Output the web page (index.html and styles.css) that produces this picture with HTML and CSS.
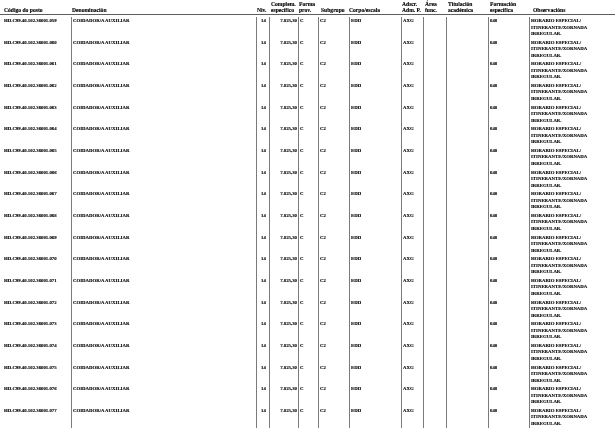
FILE: index.html
```html
<!DOCTYPE html>
<html lang="gl">
<head>
<meta charset="utf-8">
<title>RPT</title>
<link rel="stylesheet" href="styles.css">
</head>
<body>
<div class="page">
  <div class="head">
    <div class="h h-cod">Código do posto</div>
    <div class="h h-den">Denominación</div>
    <div class="h h-niv">Niv.</div>
    <div class="h h-com">Complem.<br>específico</div>
    <div class="h h-for">Forma<br>prov.</div>
    <div class="h h-sub">Subgrupo</div>
    <div class="h h-cor">Corpo/escala</div>
    <div class="h h-ads">Adscr.<br>Adm. P.</div>
    <div class="h h-are">Área<br>func.</div>
    <div class="h h-tit">Titulación<br>académica</div>
    <div class="h h-fes">Formación<br>específica</div>
    <div class="h h-obs">Observacións</div>
  </div>
  <div class="rows">
    <div class="row"><div class="c">HD.C99.40.102.36001.059</div><div class="c b">COIDADOR/A AUXILIAR</div><div class="c b ctr">14</div><div class="c b r">7.825,30</div><div class="c b">C</div><div class="c b">C2</div><div class="c b">EDD</div><div class="c b">AXG</div><div class="c b"></div><div class="c b"></div><div class="c b">648</div><div class="c b obs">HORARIO ESPECIAL/<br>ITINERANTE/XORNADA<br>IRREGULAR.</div></div>
    <div class="row"><div class="c">HD.C99.40.102.36001.060</div><div class="c b">COIDADOR/A AUXILIAR</div><div class="c b ctr">14</div><div class="c b r">7.825,30</div><div class="c b">C</div><div class="c b">C2</div><div class="c b">EDD</div><div class="c b">AXG</div><div class="c b"></div><div class="c b"></div><div class="c b">648</div><div class="c b obs">HORARIO ESPECIAL/<br>ITINERANTE/XORNADA<br>IRREGULAR.</div></div>
    <div class="row"><div class="c">HD.C99.40.102.36001.061</div><div class="c b">COIDADOR/A AUXILIAR</div><div class="c b ctr">14</div><div class="c b r">7.825,30</div><div class="c b">C</div><div class="c b">C2</div><div class="c b">EDD</div><div class="c b">AXG</div><div class="c b"></div><div class="c b"></div><div class="c b">648</div><div class="c b obs">HORARIO ESPECIAL/<br>ITINERANTE/XORNADA<br>IRREGULAR.</div></div>
    <div class="row"><div class="c">HD.C99.40.102.36001.062</div><div class="c b">COIDADOR/A AUXILIAR</div><div class="c b ctr">14</div><div class="c b r">7.825,30</div><div class="c b">C</div><div class="c b">C2</div><div class="c b">EDD</div><div class="c b">AXG</div><div class="c b"></div><div class="c b"></div><div class="c b">648</div><div class="c b obs">HORARIO ESPECIAL/<br>ITINERANTE/XORNADA<br>IRREGULAR.</div></div>
    <div class="row"><div class="c">HD.C99.40.102.36001.063</div><div class="c b">COIDADOR/A AUXILIAR</div><div class="c b ctr">14</div><div class="c b r">7.825,30</div><div class="c b">C</div><div class="c b">C2</div><div class="c b">EDD</div><div class="c b">AXG</div><div class="c b"></div><div class="c b"></div><div class="c b">648</div><div class="c b obs">HORARIO ESPECIAL/<br>ITINERANTE/XORNADA<br>IRREGULAR.</div></div>
    <div class="row"><div class="c">HD.C99.40.102.36001.064</div><div class="c b">COIDADOR/A AUXILIAR</div><div class="c b ctr">14</div><div class="c b r">7.825,30</div><div class="c b">C</div><div class="c b">C2</div><div class="c b">EDD</div><div class="c b">AXG</div><div class="c b"></div><div class="c b"></div><div class="c b">648</div><div class="c b obs">HORARIO ESPECIAL/<br>ITINERANTE/XORNADA<br>IRREGULAR.</div></div>
    <div class="row"><div class="c">HD.C99.40.102.36001.065</div><div class="c b">COIDADOR/A AUXILIAR</div><div class="c b ctr">14</div><div class="c b r">7.825,30</div><div class="c b">C</div><div class="c b">C2</div><div class="c b">EDD</div><div class="c b">AXG</div><div class="c b"></div><div class="c b"></div><div class="c b">648</div><div class="c b obs">HORARIO ESPECIAL/<br>ITINERANTE/XORNADA<br>IRREGULAR.</div></div>
    <div class="row"><div class="c">HD.C99.40.102.36001.066</div><div class="c b">COIDADOR/A AUXILIAR</div><div class="c b ctr">14</div><div class="c b r">7.825,30</div><div class="c b">C</div><div class="c b">C2</div><div class="c b">EDD</div><div class="c b">AXG</div><div class="c b"></div><div class="c b"></div><div class="c b">648</div><div class="c b obs">HORARIO ESPECIAL/<br>ITINERANTE/XORNADA<br>IRREGULAR.</div></div>
    <div class="row"><div class="c">HD.C99.40.102.36001.067</div><div class="c b">COIDADOR/A AUXILIAR</div><div class="c b ctr">14</div><div class="c b r">7.825,30</div><div class="c b">C</div><div class="c b">C2</div><div class="c b">EDD</div><div class="c b">AXG</div><div class="c b"></div><div class="c b"></div><div class="c b">648</div><div class="c b obs">HORARIO ESPECIAL/<br>ITINERANTE/XORNADA<br>IRREGULAR.</div></div>
    <div class="row"><div class="c">HD.C99.40.102.36001.068</div><div class="c b">COIDADOR/A AUXILIAR</div><div class="c b ctr">14</div><div class="c b r">7.825,30</div><div class="c b">C</div><div class="c b">C2</div><div class="c b">EDD</div><div class="c b">AXG</div><div class="c b"></div><div class="c b"></div><div class="c b">648</div><div class="c b obs">HORARIO ESPECIAL/<br>ITINERANTE/XORNADA<br>IRREGULAR.</div></div>
    <div class="row"><div class="c">HD.C99.40.102.36001.069</div><div class="c b">COIDADOR/A AUXILIAR</div><div class="c b ctr">14</div><div class="c b r">7.825,30</div><div class="c b">C</div><div class="c b">C2</div><div class="c b">EDD</div><div class="c b">AXG</div><div class="c b"></div><div class="c b"></div><div class="c b">648</div><div class="c b obs">HORARIO ESPECIAL/<br>ITINERANTE/XORNADA<br>IRREGULAR.</div></div>
    <div class="row"><div class="c">HD.C99.40.102.36001.070</div><div class="c b">COIDADOR/A AUXILIAR</div><div class="c b ctr">14</div><div class="c b r">7.825,30</div><div class="c b">C</div><div class="c b">C2</div><div class="c b">EDD</div><div class="c b">AXG</div><div class="c b"></div><div class="c b"></div><div class="c b">648</div><div class="c b obs">HORARIO ESPECIAL/<br>ITINERANTE/XORNADA<br>IRREGULAR.</div></div>
    <div class="row"><div class="c">HD.C99.40.102.36001.071</div><div class="c b">COIDADOR/A AUXILIAR</div><div class="c b ctr">14</div><div class="c b r">7.825,30</div><div class="c b">C</div><div class="c b">C2</div><div class="c b">EDD</div><div class="c b">AXG</div><div class="c b"></div><div class="c b"></div><div class="c b">648</div><div class="c b obs">HORARIO ESPECIAL/<br>ITINERANTE/XORNADA<br>IRREGULAR.</div></div>
    <div class="row"><div class="c">HD.C99.40.102.36001.072</div><div class="c b">COIDADOR/A AUXILIAR</div><div class="c b ctr">14</div><div class="c b r">7.825,30</div><div class="c b">C</div><div class="c b">C2</div><div class="c b">EDD</div><div class="c b">AXG</div><div class="c b"></div><div class="c b"></div><div class="c b">648</div><div class="c b obs">HORARIO ESPECIAL/<br>ITINERANTE/XORNADA<br>IRREGULAR.</div></div>
    <div class="row"><div class="c">HD.C99.40.102.36001.073</div><div class="c b">COIDADOR/A AUXILIAR</div><div class="c b ctr">14</div><div class="c b r">7.825,30</div><div class="c b">C</div><div class="c b">C2</div><div class="c b">EDD</div><div class="c b">AXG</div><div class="c b"></div><div class="c b"></div><div class="c b">648</div><div class="c b obs">HORARIO ESPECIAL/<br>ITINERANTE/XORNADA<br>IRREGULAR.</div></div>
    <div class="row"><div class="c">HD.C99.40.102.36001.074</div><div class="c b">COIDADOR/A AUXILIAR</div><div class="c b ctr">14</div><div class="c b r">7.825,30</div><div class="c b">C</div><div class="c b">C2</div><div class="c b">EDD</div><div class="c b">AXG</div><div class="c b"></div><div class="c b"></div><div class="c b">648</div><div class="c b obs">HORARIO ESPECIAL/<br>ITINERANTE/XORNADA<br>IRREGULAR.</div></div>
    <div class="row"><div class="c">HD.C99.40.102.36001.075</div><div class="c b">COIDADOR/A AUXILIAR</div><div class="c b ctr">14</div><div class="c b r">7.825,30</div><div class="c b">C</div><div class="c b">C2</div><div class="c b">EDD</div><div class="c b">AXG</div><div class="c b"></div><div class="c b"></div><div class="c b">648</div><div class="c b obs">HORARIO ESPECIAL/<br>ITINERANTE/XORNADA<br>IRREGULAR.</div></div>
    <div class="row"><div class="c">HD.C99.40.102.36001.076</div><div class="c b">COIDADOR/A AUXILIAR</div><div class="c b ctr">14</div><div class="c b r">7.825,30</div><div class="c b">C</div><div class="c b">C2</div><div class="c b">EDD</div><div class="c b">AXG</div><div class="c b"></div><div class="c b"></div><div class="c b">648</div><div class="c b obs">HORARIO ESPECIAL/<br>ITINERANTE/XORNADA<br>IRREGULAR.</div></div>
    <div class="row"><div class="c">HD.C99.40.102.36001.077</div><div class="c b">COIDADOR/A AUXILIAR</div><div class="c b ctr">14</div><div class="c b r">7.825,30</div><div class="c b">C</div><div class="c b">C2</div><div class="c b">EDD</div><div class="c b">AXG</div><div class="c b"></div><div class="c b"></div><div class="c b">648</div><div class="c b obs">HORARIO ESPECIAL/<br>ITINERANTE/XORNADA<br>IRREGULAR.</div></div>
  </div>
</div>
</body>
</html>
```
FILE: styles.css
```css
html, body {
  margin: 0;
  padding: 0;
  background: #ffffff;
}
.page {
  width: 615px;
  height: 439px;
  font-family: "Liberation Serif", "Times New Roman", serif;
  font-weight: bold;
  color: #000;
  overflow: hidden;
  background: #ffffff;
  filter: grayscale(100%);
}
.head {
  display: grid;
  grid-template-columns: 72px 185px 14px 28px 22px 28px 53px 23px 23px 42px 43px 82px;
  align-items: end;
  height: 14px;
  border-bottom: 1px solid #5e5e5e;
  font-size: 5.6px;
  line-height: 6.6px;
  -webkit-text-stroke: 0.12px #000;
}
.h {
  white-space: nowrap;
}
.h-cod { padding-left: 4px; }
.rows {
  display: grid;
  grid-auto-rows: 21.67px;
  margin-top: 2px;
}
.row {
  display: grid;
  grid-template-columns: 71px 185px 13px 29px 20px 31px 52px 22px 23px 42px 41px 86px;
  font-size: 4.8px;
  line-height: 6.5px;
  -webkit-text-stroke: 0.12px #000;
}
.c {
  padding-left: 1px;
  padding-top: 1px;
  white-space: nowrap;
  overflow: hidden;
}
.row .c:first-child {
  padding-left: 4px;
}
.b {
  border-left: 1px solid #7a7a7a;
  padding-left: 1px;
}
.ctr {
  text-align: center;
}
.r {
  text-align: right;
  padding-right: 1px;
}
```
